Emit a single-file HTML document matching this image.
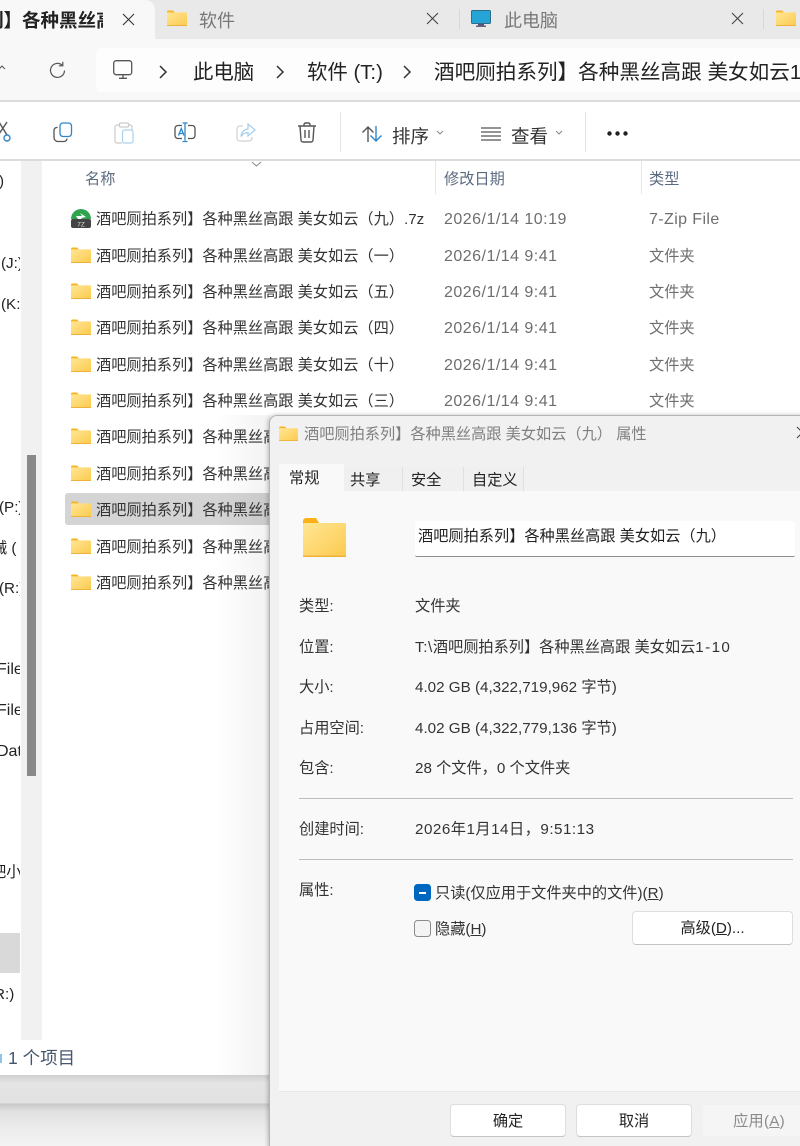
<!DOCTYPE html>
<html lang="zh-CN"><head><meta charset="utf-8"><title>属性</title>
<style>
html,body{margin:0;padding:0;background:#fff}
#p{position:relative;width:800px;height:1146px;overflow:hidden;background:#fff;font-family:"Liberation Sans","Noto Sans CJK SC",sans-serif;color:#222}
.a{position:absolute}
.t{position:absolute;white-space:nowrap;line-height:22px;height:22px;font-size:15.2px;margin-top:1px}
.r{margin-top:2px;color:#333}
.g{color:#6e6e6e;margin-top:2px}
.d{font-size:16px;letter-spacing:.48px}
.h{color:#5b6b80;margin-top:2px}
.ab{font-size:20.6px;line-height:28px;height:28px;color:#222}
.tab{font-size:18px;color:#777;margin-top:0}
.clip{overflow:hidden}
.btn{position:absolute;background:#fff;border:1px solid #dedede;border-bottom-color:#c4c4c4;border-radius:4px;text-align:center;font-size:15.2px;color:#222;box-sizing:border-box}
svg{position:absolute;overflow:visible}
</style></head><body><div id="p">
<svg width="0" height="0" style="position:absolute"><defs>
<linearGradient id="fg" x1="0" y1="0" x2="1" y2="1"><stop offset="0" stop-color="#ffe694"/><stop offset="1" stop-color="#fcca4f"/></linearGradient>
<symbol id="f" viewBox="0 0 20 16"><path d="M0 2a1.5 1.5 0 0 1 1.5-1.5H6L8 2.5H0z" fill="#f7b422"/><rect x="0" y="2.4" width="20" height="13.6" rx="1" fill="url(#fg)"/><rect x="0" y="15" width="20" height="1" fill="#eeb23a"/></symbol>
</defs></svg>

<!-- tab bar -->
<div class="a" style="left:0;top:0;width:800px;height:39px;background:#e9e9e9"></div>
<div class="a" style="left:0;top:0;width:155px;height:40px;background:#f8f8f8;border-radius:0 10px 0 0"></div>
<div class="a clip" style="left:0;top:8px;width:103px;height:26px"><div class="t" style="left:-15px;top:0;margin:0;font-size:18.5px;height:26px;line-height:26px;font-weight:700;color:#222">列】各种黑丝高跟</div></div>
<svg style="left:122px;top:13px" width="13" height="13"><path d="M1 1l11 11M12 1L1 12" stroke="#333" stroke-width="1.1" fill="none"/></svg>
<svg style="left:167px;top:10px" width="20" height="16"><use href="#f" width="20" height="16"/></svg>
<div class="t tab" style="left:199px;top:9px;height:24px;line-height:24px">软件</div>
<svg style="left:426px;top:12px" width="13" height="13"><path d="M1 1l11 11M12 1L1 12" stroke="#444" stroke-width="1.1" fill="none"/></svg>
<div class="a" style="left:459px;top:9px;width:1px;height:20px;background:#d8d8d8"></div>
<svg style="left:471px;top:10px" width="20" height="17"><rect x="0.5" y="0.5" width="19" height="13" rx="1" fill="#25a5d6" stroke="#2d6f8a"/><rect x="7" y="14" width="6" height="1.5" fill="#557"/><rect x="5" y="15.5" width="10" height="1.5" fill="#667"/></svg>
<div class="t tab" style="left:504px;top:9px;height:24px;line-height:24px">此电脑</div>
<svg style="left:731px;top:12px" width="13" height="13"><path d="M1 1l11 11M12 1L1 12" stroke="#444" stroke-width="1.1" fill="none"/></svg>
<div class="a" style="left:763px;top:9px;width:1px;height:20px;background:#d8d8d8"></div>
<svg style="left:776px;top:10px" width="20" height="16"><use href="#f" width="20" height="16"/></svg>

<!-- address row -->
<div class="a" style="left:0;top:39px;width:800px;height:61px;background:#f8f8f8"></div>
<div class="a" style="left:0;top:100px;width:800px;height:2px;background:#dcdcdc"></div>
<div class="a" style="left:96px;top:48px;width:704px;height:44px;background:#fdfdfd;border-radius:6px 0 0 6px"></div>
<svg style="left:-2px;top:64px" width="8" height="6"><path d="M1 5l3-3 3 3" stroke="#555" fill="none" stroke-width="1"/></svg>
<svg style="left:49px;top:61px" width="17" height="18" fill="none" stroke="#555" stroke-width="1.2"><path d="M13.5 4.5A7 7 0 1 0 15.5 9.5"/><path d="M13.8 0.8v4h-4"/></svg>
<svg style="left:113px;top:60px" width="20" height="20" fill="none" stroke="#555" stroke-width="1.3"><rect x="0.7" y="0.7" width="18" height="14" rx="2.5"/><path d="M10 15v3M6 18.3h8"/></svg>
<svg style="left:159px;top:65px" width="9" height="14" fill="none" stroke="#333" stroke-width="1.5"><path d="M1 1l6 6-6 6"/></svg>
<div class="t ab" style="left:193px;top:58px;font-size:20.4px">此电脑</div>
<svg style="left:276px;top:65px" width="9" height="14" fill="none" stroke="#333" stroke-width="1.5"><path d="M1 1l6 6-6 6"/></svg>
<div class="t ab" style="left:307px;top:58px;font-size:20.4px">软件 (T:)</div>
<svg style="left:403px;top:65px" width="9" height="14" fill="none" stroke="#333" stroke-width="1.5"><path d="M1 1l6 6-6 6"/></svg>
<div class="t ab" style="left:434px;top:58px">酒吧厕拍系列】各种黑丝高跟 美女如云1-10</div>

<!-- toolbar -->
<svg style="left:-4px;top:120px" width="16" height="24" fill="none" stroke-width="1.4"><path d="M3 2l8 13M11 2L3 14" stroke="#555"/><circle cx="11" cy="18" r="3" stroke="#2f86c9"/></svg>
<svg style="left:53px;top:122px" width="20" height="21" fill="none" stroke-width="1.3"><rect x="7" y="1" width="11.5" height="13.5" rx="3" stroke="#2f86c9"/><path d="M4.5 5.5A3 3 0 0 0 1 8.5v7A4 4 0 0 0 5 19.5h6a3 3 0 0 0 3-3" stroke="#555"/></svg>
<svg style="left:114px;top:122px" width="20" height="22" fill="none" stroke-width="1.2" opacity=".5"><path d="M6 3H3a2 2 0 0 0-2 2v14a2 2 0 0 0 2 2h5" stroke="#999"/><path d="M14 3h2a2 2 0 0 1 2 2v3" stroke="#999"/><rect x="5.5" y="1" width="9" height="4" rx="1" stroke="#999"/><rect x="8.5" y="8" width="10.5" height="13" rx="2" stroke="#5aa6e0"/></svg>
<svg style="left:174px;top:122px" width="22" height="21" fill="none" stroke-width="1.3"><path d="M8 3.500H4a3 3 0 0 0-3 3v7a3 3 0 0 0 3 3h4" stroke="#555"/><path d="M14 3.500h4a3 3 0 0 1 3 3v7a3 3 0 0 1-3 3h-4" stroke="#555"/><path d="M11 1.500v17M8.500 1h5M8.500 19.500h5" stroke="#2f86c9"/><path d="M4.500 13.500l2.800-7 2.700 7M5.500 11.500h3.500" stroke="#2f86c9"/></svg>
<svg style="left:236px;top:123px" width="20" height="19" fill="none" stroke-width="1.2" opacity=".55"><path d="M7 3H4a3 3 0 0 0-3 3v9a3 3 0 0 0 3 3h9a3 3 0 0 0 3-3v-1" stroke="#aaa"/><path d="M12 1l7 6-7 6V9.500c-3 0-5 1-7 4 .5-4.500 3-7 7-7.500z" stroke="#5aa6e0"/></svg>
<svg style="left:297px;top:122px" width="20" height="21" fill="none" stroke="#555" stroke-width="1.4"><path d="M1 4h18M7 4V2.500A1.500 1.500 0 0 1 8.500 1h3A1.500 1.500 0 0 1 13 2.500V4M3 4l1 14a2 2 0 0 0 2 2h8a2 2 0 0 0 2-2l1-14M8 8v8M12 8v8"/></svg>
<div class="a" style="left:340px;top:112px;width:1px;height:40px;background:#e4e4e4"></div>
<svg style="left:361px;top:125px" width="22" height="18" fill="none" stroke-width="1.4"><path d="M7 17V2M1.500 7.500L7 2l5.500 5.500" stroke="#555"/><path d="M15 1v15M9.500 10.500L15 16l5.500-5.500" stroke="#2f86c9"/></svg>
<div class="t" style="left:392px;top:122px;margin-top:2px;font-size:18.500px;height:26px;line-height:26px;color:#333">排序</div>
<svg style="left:436px;top:130px" width="8" height="5" fill="none" stroke="#888"><path d="M1 1l3 3 3-3"/></svg>
<svg style="left:481px;top:127px" width="20" height="14" stroke="#555" stroke-width="1.200"><path d="M0 1h20M0 5h20M0 9h20M0 13h20"/></svg>
<div class="t" style="left:511px;top:122px;margin-top:2px;font-size:18.500px;height:26px;line-height:26px;color:#333">查看</div>
<svg style="left:555px;top:130px" width="8" height="5" fill="none" stroke="#888"><path d="M1 1l3 3 3-3"/></svg>
<div class="a" style="left:585px;top:112px;width:1px;height:40px;background:#e4e4e4"></div>
<svg style="left:607px;top:131px" width="21" height="5" fill="#222"><circle cx="2.500" cy="2.500" r="2.200"/><circle cx="10.500" cy="2.500" r="2.200"/><circle cx="18.500" cy="2.500" r="2.200"/></svg>
<div class="a" style="left:0;top:159px;width:800px;height:2px;background:#dcdcdc"></div>

<!-- side nav -->
<div class="a" style="left:21px;top:161px;width:21px;height:879px;background:#f1f1f2"></div>
<div class="a" style="left:27px;top:455px;width:9px;height:321px;background:#898989"></div>
<div class="a" style="left:0;top:933px;width:20px;height:40px;background:#d9d9d9"></div>
<div class="a clip" style="left:0;top:161px;width:20px;height:880px">
<div class="t" style="left:-1px;top:9px">)</div>
<div class="t" style="left:1px;top:91px">(J:)</div>
<div class="t" style="left:1px;top:132px">(K:)</div>
<div class="t" style="left:-1px;top:335px">(P:)</div>
<div class="t" style="left:-8px;top:376px">械 (</div>
<div class="t" style="left:-1px;top:416px">(R:)</div>
<div class="t" style="left:-3px;top:497px;font-size:16px">File</div>
<div class="t" style="left:-3px;top:538px;font-size:16px">File</div>
<div class="t" style="left:-3px;top:579px;font-size:16px">Data</div>
<div class="t" style="left:-9px;top:700px">吧小</div>
<div class="t" style="left:-11px;top:822px">(R:)</div>
</div>

<!-- header -->
<div class="t h" style="left:85px;top:167px">名称</div>
<svg style="left:251px;top:161px" width="11" height="6" fill="none" stroke="#888"><path d="M1 1l4.500 4 4.500-4"/></svg>
<div class="a" style="left:435px;top:161px;width:1px;height:33px;background:#e6e6e6"></div>
<div class="t h" style="left:444px;top:167px">修改日期</div>
<div class="a" style="left:641px;top:161px;width:1px;height:33px;background:#e6e6e6"></div>
<div class="t h" style="left:649px;top:167px">类型</div>

<!-- selection -->
<div class="a" style="left:65px;top:493px;width:210px;height:32px;background:#d4d4d4;border-radius:3px"></div>

<!-- rows -->
<svg style="left:71px;top:209px" width="20" height="19"><path d="M0 10a10 10 0 0 1 20 0z" fill="#2ea44f"/><path d="M5 7h6l-2-3 6 4-5 1 1 1H7z" fill="#fff"/><rect x="0" y="10" width="20" height="9" rx="2" fill="#444"/><text x="10" y="17.500" font-size="6.500" fill="#ddd" text-anchor="middle" font-family="Liberation Sans">7Z</text></svg>
<div class="t" style="left:96px;top:208px;color:#333">酒吧厕拍系列】各种黑丝高跟 美女如云（九）.7z</div>
<div class="t g d" style="left:444px;top:207px">2026/1/14 10:19</div>
<div class="t g d" style="left:649px;top:207px;letter-spacing:.4px">7-Zip File</div>

<svg style="left:71px;top:247px" width="20" height="16"><use href="#f" width="20" height="16"/></svg>
<div class="t r" style="left:96px;top:244px">酒吧厕拍系列】各种黑丝高跟 美女如云（一）</div>
<div class="t g d" style="left:444px;top:244px">2026/1/14 9:41</div>
<div class="t g" style="left:649px;top:244px">文件夹</div>

<svg style="left:71px;top:283px" width="20" height="16"><use href="#f" width="20" height="16"/></svg>
<div class="t r" style="left:96px;top:280px">酒吧厕拍系列】各种黑丝高跟 美女如云（五）</div>
<div class="t g d" style="left:444px;top:280px">2026/1/14 9:41</div>
<div class="t g" style="left:649px;top:280px">文件夹</div>

<svg style="left:71px;top:319px" width="20" height="16"><use href="#f" width="20" height="16"/></svg>
<div class="t r" style="left:96px;top:316px">酒吧厕拍系列】各种黑丝高跟 美女如云（四）</div>
<div class="t g d" style="left:444px;top:316px">2026/1/14 9:41</div>
<div class="t g" style="left:649px;top:316px">文件夹</div>

<svg style="left:71px;top:356px" width="20" height="16"><use href="#f" width="20" height="16"/></svg>
<div class="t r" style="left:96px;top:353px">酒吧厕拍系列】各种黑丝高跟 美女如云（十）</div>
<div class="t g d" style="left:444px;top:353px">2026/1/14 9:41</div>
<div class="t g" style="left:649px;top:353px">文件夹</div>

<svg style="left:71px;top:392px" width="20" height="16"><use href="#f" width="20" height="16"/></svg>
<div class="t r" style="left:96px;top:389px">酒吧厕拍系列】各种黑丝高跟 美女如云（三）</div>
<div class="t g d" style="left:444px;top:389px">2026/1/14 9:41</div>
<div class="t g" style="left:649px;top:389px">文件夹</div>

<svg style="left:71px;top:428px" width="20" height="16"><use href="#f" width="20" height="16"/></svg>
<div class="t r" style="left:96px;top:425px">酒吧厕拍系列】各种黑丝高跟 美女如云</div>
<svg style="left:71px;top:465px" width="20" height="16"><use href="#f" width="20" height="16"/></svg>
<div class="t r" style="left:96px;top:462px">酒吧厕拍系列】各种黑丝高跟 美女如云</div>
<svg style="left:71px;top:501px" width="20" height="16"><use href="#f" width="20" height="16"/></svg>
<div class="t r" style="left:96px;top:498px">酒吧厕拍系列】各种黑丝高跟 美女如云</div>
<svg style="left:71px;top:538px" width="20" height="16"><use href="#f" width="20" height="16"/></svg>
<div class="t r" style="left:96px;top:535px">酒吧厕拍系列】各种黑丝高跟 美女如云</div>
<svg style="left:71px;top:574px" width="20" height="16"><use href="#f" width="20" height="16"/></svg>
<div class="t r" style="left:96px;top:571px">酒吧厕拍系列】各种黑丝高跟 美女如云</div>

<!-- status -->
<div class="a" style="left:0;top:1054px;width:2px;height:9px;background:#8fc4e8"></div>
<div class="t" style="left:8px;top:1044px;font-size:17.500px;height:26px;line-height:26px;color:#44566c">1 个项目</div>

<!-- below window -->
<div class="a" style="left:0;top:1075px;width:270px;height:71px;background:linear-gradient(#cfcfcf 0,#e4e4e4 8px,#e2e2e2 28px,#c9c9c9 29px,#e0e0e0 36px,#ededed 55px,#f3f3f3 71px)"></div>
<div class="a" style="left:215px;top:415px;width:55px;height:660px;background:linear-gradient(90deg,rgba(0,0,0,0),rgba(0,0,0,.05))"></div>

<!-- dialog -->
<div class="a" style="left:269px;top:415px;width:540px;height:740px;background:#f1f1f1;border:1px solid #b5b5b5;border-radius:8px;box-sizing:border-box;box-shadow:-1px 0 4px rgba(0,0,0,.25)"></div>
<svg style="left:279px;top:426px" width="19" height="15"><use href="#f" width="19" height="15"/></svg>
<div class="t" style="left:304px;top:423px;color:#808080">酒吧厕拍系列】各种黑丝高跟 美女如云（九） 属性</div>
<svg style="left:796px;top:426px" width="8" height="13"><path d="M1 1l11 11M12 1L1 12" stroke="#444" stroke-width="1.100" fill="none"/></svg>

<div class="a" style="left:279px;top:491px;width:521px;height:600px;background:#f9f9f9"></div>
<div class="a" style="left:279px;top:464px;width:65px;height:28px;background:#f9f9f9"></div>
<div class="a" style="left:344px;top:467px;width:59px;height:24px;background:#f0f0f0;border-right:1px solid #e0e0e0;box-sizing:border-box"></div>
<div class="a" style="left:403px;top:467px;width:61px;height:24px;background:#f0f0f0;border-right:1px solid #e0e0e0;box-sizing:border-box"></div>
<div class="a" style="left:464px;top:467px;width:60px;height:24px;background:#f0f0f0;border-right:1px solid #e0e0e0;box-sizing:border-box"></div>
<div class="t" style="left:289px;top:467px">常规</div>
<div class="t" style="left:350px;top:469px">共享</div>
<div class="t" style="left:411px;top:469px">安全</div>
<div class="t" style="left:472px;top:469px">自定义</div>

<svg style="left:303px;top:518px" width="43" height="39"><path d="M0 3a3 3 0 0 1 3-3h10l4 6.500H0z" fill="#fbb219"/><rect x="0" y="5" width="43" height="34" rx="1.500" fill="url(#fg)"/><rect x="0" y="37.500" width="43" height="1.500" fill="#eeb23a"/></svg>
<div class="a" style="left:415px;top:521px;width:380px;height:36px;background:#fff;border-bottom:1px solid #8e8e8e;box-sizing:border-box;border-radius:2px"></div>
<div class="t" style="left:418px;top:525px;color:#222">酒吧厕拍系列】各种黑丝高跟 美女如云（九）</div>

<div class="t" style="left:299px;top:595px;color:#333">类型:</div>
<div class="t" style="left:415px;top:595px;color:#333">文件夹</div>
<div class="t" style="left:299px;top:636px;color:#333">位置:</div>
<div class="t" style="left:415px;top:636px;color:#333"><span style="letter-spacing:.6px">T:\</span>酒吧厕拍系列】各种黑丝高跟 美女如云<span style="letter-spacing:1.4px">1-10</span></div>
<div class="t" style="left:299px;top:676px;color:#333">大小:</div>
<div class="t" style="left:415px;top:676px;color:#333">4.02 GB (4,322,719,962 字节)</div>
<div class="t" style="left:299px;top:717px;color:#333">占用空间:</div>
<div class="t" style="left:415px;top:717px;color:#333">4.02 GB (4,322,779,136 字节)</div>
<div class="t" style="left:299px;top:757px;color:#333">包含:</div>
<div class="t" style="left:415px;top:757px;color:#333">28 个文件，0 个文件夹</div>
<div class="a" style="left:299px;top:798px;width:494px;height:1px;background:#bdbdbd"></div>
<div class="t" style="left:299px;top:818px;color:#333">创建时间:</div>
<div class="t" style="left:415px;top:818px;color:#333;letter-spacing:.5px">2026年1月14日，9:51:13</div>
<div class="a" style="left:299px;top:859px;width:494px;height:1px;background:#bdbdbd"></div>
<div class="t" style="left:299px;top:879px;color:#333">属性:</div>

<div class="a" style="left:414px;top:884px;width:17px;height:17px;background:#0067c0;border-radius:3.500px"></div>
<div class="a" style="left:419px;top:892px;width:7px;height:1.500px;background:#fff"></div>
<div class="t" style="left:435px;top:882px;color:#333">只读(仅应用于文件夹中的文件)(<u>R</u>)</div>
<div class="a" style="left:414px;top:920px;width:17px;height:17px;background:#f4f4f4;border:1px solid #8a8a8a;border-radius:3.500px;box-sizing:border-box"></div>
<div class="t" style="left:435px;top:918px;color:#333">隐藏(<u>H</u>)</div>
<div class="btn" style="left:632px;top:911px;width:161px;height:34px;line-height:34px">高级(<u>D</u>)...</div>

<div class="a" style="left:279px;top:1091px;width:521px;height:1px;background:#e8e8e8"></div>
<div class="btn" style="left:450px;top:1104px;width:116px;height:33px;line-height:34px">确定</div>
<div class="btn" style="left:576px;top:1104px;width:116px;height:33px;line-height:34px">取消</div>
<div class="btn" style="left:702px;top:1104px;width:116px;height:33px;line-height:34px;background:#f5f5f5;border-color:#f0f0f0;color:#8c8c8c;text-indent:-2px;letter-spacing:.2px">应用(<u>A</u>)</div>
</div></body></html>
